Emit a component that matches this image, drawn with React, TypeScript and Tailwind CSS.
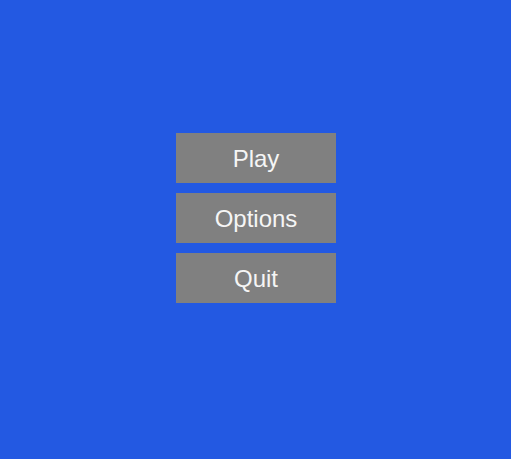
export default function App() {
  const items = ['Play', 'Options', 'Quit']
  return (
    <div className="w-[511px] h-[459px] bg-[#2359e2] flex flex-col items-center pt-[133px] gap-[10px] font-['Liberation_Sans',Arial,sans-serif]">
      {items.map((label) => (
        <button
          key={label}
          className="w-[160px] h-[50px] bg-[#808080] text-[#f5f5f5] text-[24px] flex items-center justify-center pt-[2px] pl-[1px]"
        >
          {label}
        </button>
      ))}
    </div>
  )
}
